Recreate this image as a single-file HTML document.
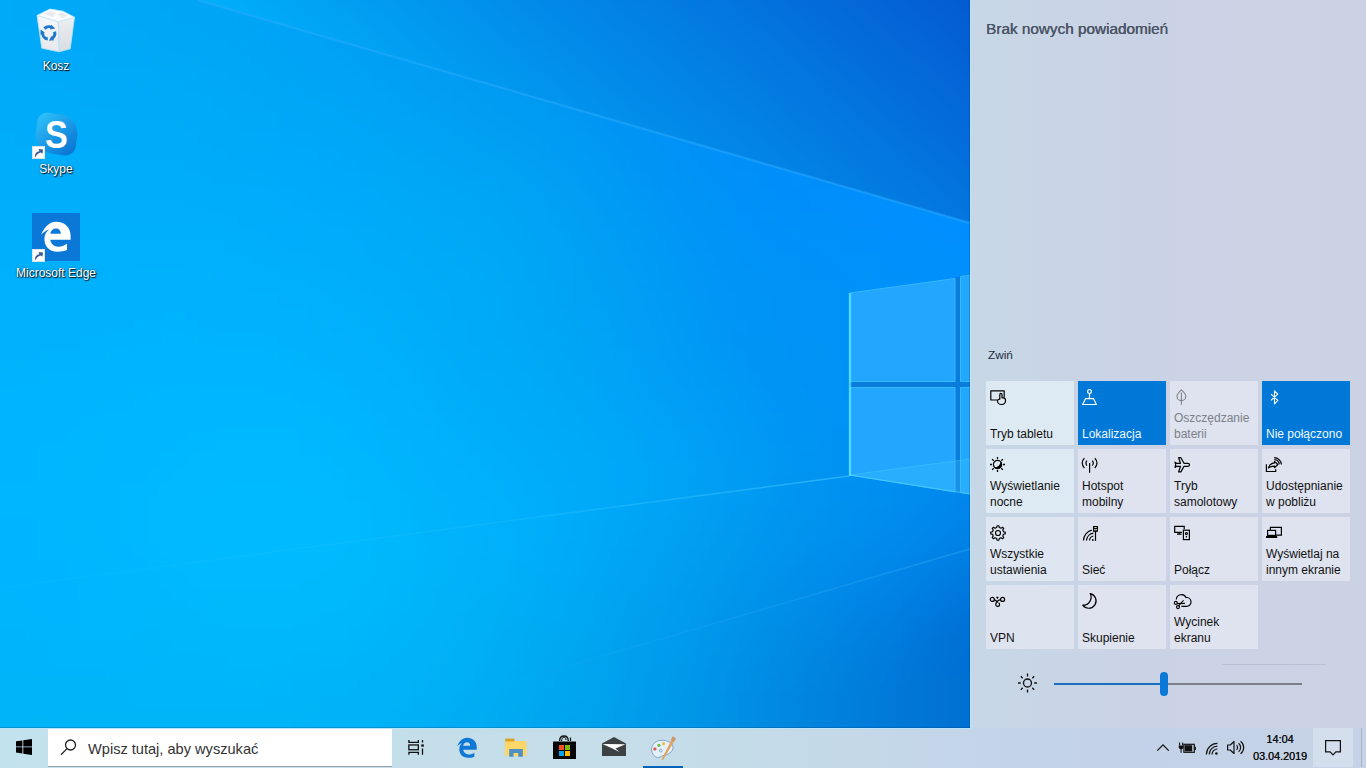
<!DOCTYPE html>
<html><head><meta charset="utf-8">
<style>
*{margin:0;padding:0;box-sizing:border-box}
html,body{width:1366px;height:768px;overflow:hidden;background:#00a8f8;font-family:"Liberation Sans",sans-serif}
.abs{position:absolute}
#wall{position:absolute;left:0;top:0;width:1366px;height:768px}
.dlabel{position:absolute;color:#fff;font-size:12px;line-height:14px;text-align:center;white-space:nowrap;text-shadow:1px 1px 1px rgba(0,0,0,.9),0 0 2px rgba(0,0,0,.6)}
#panel{position:absolute;left:970px;top:0;width:396px;height:728px;background:linear-gradient(90deg,#c7d7e6 0%,#cad3e5 40%,#cbd2e4 100%);border-left:1px solid #b9e6fd}
#panel .title{position:absolute;left:15px;top:19.5px;font-size:15.3px;color:#4b5465;white-space:nowrap;letter-spacing:0;text-shadow:0.35px 0 0 #4b5465}
#panel .zwin{position:absolute;left:17px;top:348px;font-size:11.8px;color:#1c2a3a;white-space:nowrap}
.tile{position:absolute;width:88px;height:64px;background:#dee3ef}
.tile.on{background:#0078d7}
.tile svg{position:absolute;left:4px;top:8px;width:16px;height:16px;overflow:visible}
.tile .t{position:absolute;left:4px;bottom:3px;font-size:12px;line-height:16px;color:#111;white-space:nowrap}
.tile.on .t{color:#f2f8ff}
.tile.dis .t{color:#7c8088}
#taskbar{position:absolute;left:0;top:728px;width:1366px;height:40px;background:linear-gradient(90deg,#c2e2ee 0%,#c5dde8 50%,#c3d2e9 80%,#c6d3e6 100%);}
</style></head><body>
<svg id="wall" width="1366" height="768" viewBox="0 0 1366 768">
<defs>
<filter id="blur" filterUnits="userSpaceOnUse" x="-100" y="-100" width="1200" height="1000"><feGaussianBlur stdDeviation="22"/></filter>
<linearGradient id="gTop" x1="319.4" y1="133.9" x2="702.4" y2="-288.2" gradientUnits="userSpaceOnUse"><stop offset="0" stop-color="#00b2fc"/><stop offset="1" stop-color="#0455cf"/></linearGradient>
<linearGradient id="gFloor" x1="0" y1="588" x2="849" y2="476" gradientUnits="userSpaceOnUse"><stop offset="0" stop-color="#40c8ff" stop-opacity="0.05"/><stop offset="0.6" stop-color="#40c8ff" stop-opacity="0.2"/><stop offset="1" stop-color="#50d0ff" stop-opacity="0.5"/></linearGradient>
<linearGradient id="gL2" x1="970" y1="549" x2="400" y2="715" gradientUnits="userSpaceOnUse"><stop offset="0" stop-color="#30a8f8" stop-opacity="0.45"/><stop offset="1" stop-color="#30a8f8" stop-opacity="0"/></linearGradient>
<linearGradient id="gPane" x1="0" y1="0" x2="1" y2="1">
<stop offset="0" stop-color="#28aaff"/><stop offset="1" stop-color="#1f9ffb"/>
</linearGradient>
</defs>
<g filter="url(#blur)"><rect x="-80" y="-80" width="40" height="40" fill="#00a9f9"/><rect x="-40" y="-80" width="40" height="40" fill="#00a9f9"/><rect x="0" y="-80" width="40" height="40" fill="#00a9f8"/><rect x="40" y="-80" width="40" height="40" fill="#00a8f8"/><rect x="80" y="-80" width="40" height="40" fill="#00a7f7"/><rect x="120" y="-80" width="40" height="40" fill="#00a6f6"/><rect x="160" y="-80" width="40" height="40" fill="#01a5f6"/><rect x="200" y="-80" width="40" height="40" fill="#01a4f5"/><rect x="240" y="-80" width="40" height="40" fill="#02a3f5"/><rect x="280" y="-80" width="40" height="40" fill="#02a1f4"/><rect x="320" y="-80" width="40" height="40" fill="#029ff4"/><rect x="360" y="-80" width="40" height="40" fill="#029df3"/><rect x="400" y="-80" width="40" height="40" fill="#029af3"/><rect x="440" y="-80" width="40" height="40" fill="#0298f2"/><rect x="480" y="-80" width="40" height="40" fill="#0295f2"/><rect x="520" y="-80" width="40" height="40" fill="#0293f2"/><rect x="560" y="-80" width="40" height="40" fill="#0291f3"/><rect x="600" y="-80" width="40" height="40" fill="#028ff4"/><rect x="640" y="-80" width="40" height="40" fill="#028df6"/><rect x="680" y="-80" width="40" height="40" fill="#028bf8"/><rect x="720" y="-80" width="40" height="40" fill="#038af9"/><rect x="760" y="-80" width="40" height="40" fill="#0389fb"/><rect x="800" y="-80" width="40" height="40" fill="#0488fd"/><rect x="840" y="-80" width="40" height="40" fill="#0588fe"/><rect x="880" y="-80" width="40" height="40" fill="#0587ff"/><rect x="920" y="-80" width="40" height="40" fill="#0687ff"/><rect x="960" y="-80" width="40" height="40" fill="#0786ff"/><rect x="1000" y="-80" width="40" height="40" fill="#0786ff"/><rect x="1040" y="-80" width="40" height="40" fill="#0786ff"/><rect x="-80" y="-40" width="40" height="40" fill="#00a9f9"/><rect x="-40" y="-40" width="40" height="40" fill="#00a9f9"/><rect x="0" y="-40" width="40" height="40" fill="#00a9f8"/><rect x="40" y="-40" width="40" height="40" fill="#00a8f8"/><rect x="80" y="-40" width="40" height="40" fill="#00a7f7"/><rect x="120" y="-40" width="40" height="40" fill="#00a6f6"/><rect x="160" y="-40" width="40" height="40" fill="#01a5f6"/><rect x="200" y="-40" width="40" height="40" fill="#01a4f5"/><rect x="240" y="-40" width="40" height="40" fill="#02a3f5"/><rect x="280" y="-40" width="40" height="40" fill="#02a1f4"/><rect x="320" y="-40" width="40" height="40" fill="#029ff4"/><rect x="360" y="-40" width="40" height="40" fill="#029df3"/><rect x="400" y="-40" width="40" height="40" fill="#029af3"/><rect x="440" y="-40" width="40" height="40" fill="#0298f2"/><rect x="480" y="-40" width="40" height="40" fill="#0295f2"/><rect x="520" y="-40" width="40" height="40" fill="#0293f2"/><rect x="560" y="-40" width="40" height="40" fill="#0291f3"/><rect x="600" y="-40" width="40" height="40" fill="#028ff4"/><rect x="640" y="-40" width="40" height="40" fill="#028df6"/><rect x="680" y="-40" width="40" height="40" fill="#028bf8"/><rect x="720" y="-40" width="40" height="40" fill="#038af9"/><rect x="760" y="-40" width="40" height="40" fill="#0389fb"/><rect x="800" y="-40" width="40" height="40" fill="#0488fd"/><rect x="840" y="-40" width="40" height="40" fill="#0588fe"/><rect x="880" y="-40" width="40" height="40" fill="#0587ff"/><rect x="920" y="-40" width="40" height="40" fill="#0687ff"/><rect x="960" y="-40" width="40" height="40" fill="#0786ff"/><rect x="1000" y="-40" width="40" height="40" fill="#0786ff"/><rect x="1040" y="-40" width="40" height="40" fill="#0786ff"/><rect x="-80" y="0" width="40" height="40" fill="#00aaf9"/><rect x="-40" y="0" width="40" height="40" fill="#00aaf9"/><rect x="0" y="0" width="40" height="40" fill="#00a9f8"/><rect x="40" y="0" width="40" height="40" fill="#00a8f8"/><rect x="80" y="0" width="40" height="40" fill="#00a8f7"/><rect x="120" y="0" width="40" height="40" fill="#00a7f6"/><rect x="160" y="0" width="40" height="40" fill="#01a6f6"/><rect x="200" y="0" width="40" height="40" fill="#01a5f5"/><rect x="240" y="0" width="40" height="40" fill="#02a4f5"/><rect x="280" y="0" width="40" height="40" fill="#02a2f5"/><rect x="320" y="0" width="40" height="40" fill="#02a0f4"/><rect x="360" y="0" width="40" height="40" fill="#029ef3"/><rect x="400" y="0" width="40" height="40" fill="#029bf3"/><rect x="440" y="0" width="40" height="40" fill="#0299f2"/><rect x="480" y="0" width="40" height="40" fill="#0296f2"/><rect x="520" y="0" width="40" height="40" fill="#0294f2"/><rect x="560" y="0" width="40" height="40" fill="#0292f3"/><rect x="600" y="0" width="40" height="40" fill="#028ff4"/><rect x="640" y="0" width="40" height="40" fill="#028df6"/><rect x="680" y="0" width="40" height="40" fill="#028cf7"/><rect x="720" y="0" width="40" height="40" fill="#028bf9"/><rect x="760" y="0" width="40" height="40" fill="#038afb"/><rect x="800" y="0" width="40" height="40" fill="#0489fd"/><rect x="840" y="0" width="40" height="40" fill="#0489fe"/><rect x="880" y="0" width="40" height="40" fill="#0588ff"/><rect x="920" y="0" width="40" height="40" fill="#0687ff"/><rect x="960" y="0" width="40" height="40" fill="#0787ff"/><rect x="1000" y="0" width="40" height="40" fill="#0787ff"/><rect x="1040" y="0" width="40" height="40" fill="#0787ff"/><rect x="-80" y="40" width="40" height="40" fill="#00abf9"/><rect x="-40" y="40" width="40" height="40" fill="#00abf9"/><rect x="0" y="40" width="40" height="40" fill="#00aaf9"/><rect x="40" y="40" width="40" height="40" fill="#00aaf8"/><rect x="80" y="40" width="40" height="40" fill="#00a9f8"/><rect x="120" y="40" width="40" height="40" fill="#00a9f7"/><rect x="160" y="40" width="40" height="40" fill="#01a8f6"/><rect x="200" y="40" width="40" height="40" fill="#01a7f6"/><rect x="240" y="40" width="40" height="40" fill="#01a6f6"/><rect x="280" y="40" width="40" height="40" fill="#02a4f6"/><rect x="320" y="40" width="40" height="40" fill="#02a2f5"/><rect x="360" y="40" width="40" height="40" fill="#02a0f4"/><rect x="400" y="40" width="40" height="40" fill="#029ef3"/><rect x="440" y="40" width="40" height="40" fill="#029bf2"/><rect x="480" y="40" width="40" height="40" fill="#0298f2"/><rect x="520" y="40" width="40" height="40" fill="#0296f2"/><rect x="560" y="40" width="40" height="40" fill="#0293f3"/><rect x="600" y="40" width="40" height="40" fill="#0191f4"/><rect x="640" y="40" width="40" height="40" fill="#018ff5"/><rect x="680" y="40" width="40" height="40" fill="#028df7"/><rect x="720" y="40" width="40" height="40" fill="#028cf9"/><rect x="760" y="40" width="40" height="40" fill="#038bfb"/><rect x="800" y="40" width="40" height="40" fill="#038afc"/><rect x="840" y="40" width="40" height="40" fill="#048afe"/><rect x="880" y="40" width="40" height="40" fill="#0589ff"/><rect x="920" y="40" width="40" height="40" fill="#0689ff"/><rect x="960" y="40" width="40" height="40" fill="#0688ff"/><rect x="1000" y="40" width="40" height="40" fill="#0688ff"/><rect x="1040" y="40" width="40" height="40" fill="#0688ff"/><rect x="-80" y="80" width="40" height="40" fill="#00acfa"/><rect x="-40" y="80" width="40" height="40" fill="#00acfa"/><rect x="0" y="80" width="40" height="40" fill="#00abfa"/><rect x="40" y="80" width="40" height="40" fill="#00abf9"/><rect x="80" y="80" width="40" height="40" fill="#00aaf9"/><rect x="120" y="80" width="40" height="40" fill="#00aaf8"/><rect x="160" y="80" width="40" height="40" fill="#01aaf7"/><rect x="200" y="80" width="40" height="40" fill="#01a9f7"/><rect x="240" y="80" width="40" height="40" fill="#01a8f7"/><rect x="280" y="80" width="40" height="40" fill="#01a6f7"/><rect x="320" y="80" width="40" height="40" fill="#01a5f6"/><rect x="360" y="80" width="40" height="40" fill="#02a3f5"/><rect x="400" y="80" width="40" height="40" fill="#02a0f4"/><rect x="440" y="80" width="40" height="40" fill="#029ef3"/><rect x="480" y="80" width="40" height="40" fill="#029bf2"/><rect x="520" y="80" width="40" height="40" fill="#0299f2"/><rect x="560" y="80" width="40" height="40" fill="#0196f3"/><rect x="600" y="80" width="40" height="40" fill="#0193f4"/><rect x="640" y="80" width="40" height="40" fill="#0190f5"/><rect x="680" y="80" width="40" height="40" fill="#018ef7"/><rect x="720" y="80" width="40" height="40" fill="#028df9"/><rect x="760" y="80" width="40" height="40" fill="#028cfb"/><rect x="800" y="80" width="40" height="40" fill="#038bfc"/><rect x="840" y="80" width="40" height="40" fill="#048bfe"/><rect x="880" y="80" width="40" height="40" fill="#058bff"/><rect x="920" y="80" width="40" height="40" fill="#068aff"/><rect x="960" y="80" width="40" height="40" fill="#068aff"/><rect x="1000" y="80" width="40" height="40" fill="#068aff"/><rect x="1040" y="80" width="40" height="40" fill="#068aff"/><rect x="-80" y="120" width="40" height="40" fill="#00adfa"/><rect x="-40" y="120" width="40" height="40" fill="#00adfa"/><rect x="0" y="120" width="40" height="40" fill="#00acfa"/><rect x="40" y="120" width="40" height="40" fill="#00acfa"/><rect x="80" y="120" width="40" height="40" fill="#00acf9"/><rect x="120" y="120" width="40" height="40" fill="#00abf9"/><rect x="160" y="120" width="40" height="40" fill="#01abf9"/><rect x="200" y="120" width="40" height="40" fill="#01aaf9"/><rect x="240" y="120" width="40" height="40" fill="#01a9f9"/><rect x="280" y="120" width="40" height="40" fill="#01a8f9"/><rect x="320" y="120" width="40" height="40" fill="#01a7f8"/><rect x="360" y="120" width="40" height="40" fill="#01a5f7"/><rect x="400" y="120" width="40" height="40" fill="#02a4f5"/><rect x="440" y="120" width="40" height="40" fill="#02a2f4"/><rect x="480" y="120" width="40" height="40" fill="#029ff3"/><rect x="520" y="120" width="40" height="40" fill="#029df3"/><rect x="560" y="120" width="40" height="40" fill="#0199f3"/><rect x="600" y="120" width="40" height="40" fill="#0196f4"/><rect x="640" y="120" width="40" height="40" fill="#0192f5"/><rect x="680" y="120" width="40" height="40" fill="#0190f7"/><rect x="720" y="120" width="40" height="40" fill="#028ef9"/><rect x="760" y="120" width="40" height="40" fill="#028dfa"/><rect x="800" y="120" width="40" height="40" fill="#038dfc"/><rect x="840" y="120" width="40" height="40" fill="#048dfd"/><rect x="880" y="120" width="40" height="40" fill="#058cff"/><rect x="920" y="120" width="40" height="40" fill="#068cff"/><rect x="960" y="120" width="40" height="40" fill="#068bff"/><rect x="1000" y="120" width="40" height="40" fill="#068bff"/><rect x="1040" y="120" width="40" height="40" fill="#068bff"/><rect x="-80" y="160" width="40" height="40" fill="#00aefb"/><rect x="-40" y="160" width="40" height="40" fill="#00aefb"/><rect x="0" y="160" width="40" height="40" fill="#00adfb"/><rect x="40" y="160" width="40" height="40" fill="#00adfb"/><rect x="80" y="160" width="40" height="40" fill="#00adfa"/><rect x="120" y="160" width="40" height="40" fill="#00adfa"/><rect x="160" y="160" width="40" height="40" fill="#01adfa"/><rect x="200" y="160" width="40" height="40" fill="#01acfa"/><rect x="240" y="160" width="40" height="40" fill="#00abfa"/><rect x="280" y="160" width="40" height="40" fill="#00aafa"/><rect x="320" y="160" width="40" height="40" fill="#00a9fa"/><rect x="360" y="160" width="40" height="40" fill="#01a8f8"/><rect x="400" y="160" width="40" height="40" fill="#01a7f7"/><rect x="440" y="160" width="40" height="40" fill="#02a5f5"/><rect x="480" y="160" width="40" height="40" fill="#02a4f4"/><rect x="520" y="160" width="40" height="40" fill="#02a1f4"/><rect x="560" y="160" width="40" height="40" fill="#029df4"/><rect x="600" y="160" width="40" height="40" fill="#0198f4"/><rect x="640" y="160" width="40" height="40" fill="#0195f5"/><rect x="680" y="160" width="40" height="40" fill="#0292f7"/><rect x="720" y="160" width="40" height="40" fill="#0290f8"/><rect x="760" y="160" width="40" height="40" fill="#028ffa"/><rect x="800" y="160" width="40" height="40" fill="#028efb"/><rect x="840" y="160" width="40" height="40" fill="#038efd"/><rect x="880" y="160" width="40" height="40" fill="#048efe"/><rect x="920" y="160" width="40" height="40" fill="#058dff"/><rect x="960" y="160" width="40" height="40" fill="#068dff"/><rect x="1000" y="160" width="40" height="40" fill="#068dff"/><rect x="1040" y="160" width="40" height="40" fill="#068dff"/><rect x="-80" y="200" width="40" height="40" fill="#00aefc"/><rect x="-40" y="200" width="40" height="40" fill="#00aefc"/><rect x="0" y="200" width="40" height="40" fill="#00aefc"/><rect x="40" y="200" width="40" height="40" fill="#00aefb"/><rect x="80" y="200" width="40" height="40" fill="#00aefb"/><rect x="120" y="200" width="40" height="40" fill="#01aefb"/><rect x="160" y="200" width="40" height="40" fill="#01aefb"/><rect x="200" y="200" width="40" height="40" fill="#01aefb"/><rect x="240" y="200" width="40" height="40" fill="#01adfc"/><rect x="280" y="200" width="40" height="40" fill="#00acfc"/><rect x="320" y="200" width="40" height="40" fill="#00abfb"/><rect x="360" y="200" width="40" height="40" fill="#01aaf9"/><rect x="400" y="200" width="40" height="40" fill="#01a9f8"/><rect x="440" y="200" width="40" height="40" fill="#02a8f6"/><rect x="480" y="200" width="40" height="40" fill="#02a6f5"/><rect x="520" y="200" width="40" height="40" fill="#02a3f5"/><rect x="560" y="200" width="40" height="40" fill="#02a0f4"/><rect x="600" y="200" width="40" height="40" fill="#029bf4"/><rect x="640" y="200" width="40" height="40" fill="#0297f5"/><rect x="680" y="200" width="40" height="40" fill="#0294f6"/><rect x="720" y="200" width="40" height="40" fill="#0292f8"/><rect x="760" y="200" width="40" height="40" fill="#0290f9"/><rect x="800" y="200" width="40" height="40" fill="#0290fa"/><rect x="840" y="200" width="40" height="40" fill="#028ffb"/><rect x="880" y="200" width="40" height="40" fill="#048ffd"/><rect x="920" y="200" width="40" height="40" fill="#058ffe"/><rect x="960" y="200" width="40" height="40" fill="#068efe"/><rect x="1000" y="200" width="40" height="40" fill="#068efe"/><rect x="1040" y="200" width="40" height="40" fill="#068efe"/><rect x="-80" y="240" width="40" height="40" fill="#00affc"/><rect x="-40" y="240" width="40" height="40" fill="#00affc"/><rect x="0" y="240" width="40" height="40" fill="#00affc"/><rect x="40" y="240" width="40" height="40" fill="#00b0fc"/><rect x="80" y="240" width="40" height="40" fill="#01b0fc"/><rect x="120" y="240" width="40" height="40" fill="#01b0fc"/><rect x="160" y="240" width="40" height="40" fill="#01b0fc"/><rect x="200" y="240" width="40" height="40" fill="#01b0fc"/><rect x="240" y="240" width="40" height="40" fill="#01affc"/><rect x="280" y="240" width="40" height="40" fill="#01aefc"/><rect x="320" y="240" width="40" height="40" fill="#01adfb"/><rect x="360" y="240" width="40" height="40" fill="#01acfa"/><rect x="400" y="240" width="40" height="40" fill="#01abf8"/><rect x="440" y="240" width="40" height="40" fill="#02a9f7"/><rect x="480" y="240" width="40" height="40" fill="#02a8f6"/><rect x="520" y="240" width="40" height="40" fill="#02a5f5"/><rect x="560" y="240" width="40" height="40" fill="#03a2f4"/><rect x="600" y="240" width="40" height="40" fill="#039ef4"/><rect x="640" y="240" width="40" height="40" fill="#039af5"/><rect x="680" y="240" width="40" height="40" fill="#0396f6"/><rect x="720" y="240" width="40" height="40" fill="#0293f7"/><rect x="760" y="240" width="40" height="40" fill="#0192f7"/><rect x="800" y="240" width="40" height="40" fill="#0191f8"/><rect x="840" y="240" width="40" height="40" fill="#0291fa"/><rect x="880" y="240" width="40" height="40" fill="#0390fb"/><rect x="920" y="240" width="40" height="40" fill="#0490fc"/><rect x="960" y="240" width="40" height="40" fill="#058ffd"/><rect x="1000" y="240" width="40" height="40" fill="#058ffd"/><rect x="1040" y="240" width="40" height="40" fill="#058ffd"/><rect x="-80" y="280" width="40" height="40" fill="#00b0fd"/><rect x="-40" y="280" width="40" height="40" fill="#00b0fd"/><rect x="0" y="280" width="40" height="40" fill="#00b0fd"/><rect x="40" y="280" width="40" height="40" fill="#00b1fd"/><rect x="80" y="280" width="40" height="40" fill="#01b1fd"/><rect x="120" y="280" width="40" height="40" fill="#01b2fd"/><rect x="160" y="280" width="40" height="40" fill="#02b2fd"/><rect x="200" y="280" width="40" height="40" fill="#02b1fd"/><rect x="240" y="280" width="40" height="40" fill="#02b1fd"/><rect x="280" y="280" width="40" height="40" fill="#02b0fd"/><rect x="320" y="280" width="40" height="40" fill="#01affc"/><rect x="360" y="280" width="40" height="40" fill="#01aefa"/><rect x="400" y="280" width="40" height="40" fill="#01acf9"/><rect x="440" y="280" width="40" height="40" fill="#01aaf7"/><rect x="480" y="280" width="40" height="40" fill="#02a9f6"/><rect x="520" y="280" width="40" height="40" fill="#02a6f5"/><rect x="560" y="280" width="40" height="40" fill="#03a3f4"/><rect x="600" y="280" width="40" height="40" fill="#03a0f4"/><rect x="640" y="280" width="40" height="40" fill="#039bf4"/><rect x="680" y="280" width="40" height="40" fill="#0397f5"/><rect x="720" y="280" width="40" height="40" fill="#0294f6"/><rect x="760" y="280" width="40" height="40" fill="#0193f6"/><rect x="800" y="280" width="40" height="40" fill="#0092f6"/><rect x="840" y="280" width="40" height="40" fill="#0191f8"/><rect x="880" y="280" width="40" height="40" fill="#0291f9"/><rect x="920" y="280" width="40" height="40" fill="#0390fa"/><rect x="960" y="280" width="40" height="40" fill="#048efa"/><rect x="1000" y="280" width="40" height="40" fill="#048efa"/><rect x="1040" y="280" width="40" height="40" fill="#048efa"/><rect x="-80" y="320" width="40" height="40" fill="#00b2fd"/><rect x="-40" y="320" width="40" height="40" fill="#00b2fd"/><rect x="0" y="320" width="40" height="40" fill="#00b2fd"/><rect x="40" y="320" width="40" height="40" fill="#00b2fd"/><rect x="80" y="320" width="40" height="40" fill="#01b3fe"/><rect x="120" y="320" width="40" height="40" fill="#01b3fe"/><rect x="160" y="320" width="40" height="40" fill="#02b4fe"/><rect x="200" y="320" width="40" height="40" fill="#02b3fe"/><rect x="240" y="320" width="40" height="40" fill="#02b3fe"/><rect x="280" y="320" width="40" height="40" fill="#02b2fd"/><rect x="320" y="320" width="40" height="40" fill="#02b1fc"/><rect x="360" y="320" width="40" height="40" fill="#01affb"/><rect x="400" y="320" width="40" height="40" fill="#01adf9"/><rect x="440" y="320" width="40" height="40" fill="#01abf8"/><rect x="480" y="320" width="40" height="40" fill="#02a9f7"/><rect x="520" y="320" width="40" height="40" fill="#02a7f6"/><rect x="560" y="320" width="40" height="40" fill="#02a5f5"/><rect x="600" y="320" width="40" height="40" fill="#03a1f5"/><rect x="640" y="320" width="40" height="40" fill="#039df5"/><rect x="680" y="320" width="40" height="40" fill="#0298f5"/><rect x="720" y="320" width="40" height="40" fill="#0295f5"/><rect x="760" y="320" width="40" height="40" fill="#0193f5"/><rect x="800" y="320" width="40" height="40" fill="#0092f5"/><rect x="840" y="320" width="40" height="40" fill="#0191f6"/><rect x="880" y="320" width="40" height="40" fill="#0190f7"/><rect x="920" y="320" width="40" height="40" fill="#028ff8"/><rect x="960" y="320" width="40" height="40" fill="#038df7"/><rect x="1000" y="320" width="40" height="40" fill="#038df7"/><rect x="1040" y="320" width="40" height="40" fill="#038df7"/><rect x="-80" y="360" width="40" height="40" fill="#00b3fd"/><rect x="-40" y="360" width="40" height="40" fill="#00b3fd"/><rect x="0" y="360" width="40" height="40" fill="#00b3fe"/><rect x="40" y="360" width="40" height="40" fill="#00b4fe"/><rect x="80" y="360" width="40" height="40" fill="#01b4fe"/><rect x="120" y="360" width="40" height="40" fill="#01b5fe"/><rect x="160" y="360" width="40" height="40" fill="#02b5fe"/><rect x="200" y="360" width="40" height="40" fill="#02b5fe"/><rect x="240" y="360" width="40" height="40" fill="#02b5fe"/><rect x="280" y="360" width="40" height="40" fill="#02b4fe"/><rect x="320" y="360" width="40" height="40" fill="#02b3fd"/><rect x="360" y="360" width="40" height="40" fill="#01b1fb"/><rect x="400" y="360" width="40" height="40" fill="#01affa"/><rect x="440" y="360" width="40" height="40" fill="#01acf9"/><rect x="480" y="360" width="40" height="40" fill="#01abf8"/><rect x="520" y="360" width="40" height="40" fill="#02a9f7"/><rect x="560" y="360" width="40" height="40" fill="#02a6f7"/><rect x="600" y="360" width="40" height="40" fill="#02a3f6"/><rect x="640" y="360" width="40" height="40" fill="#029ff6"/><rect x="680" y="360" width="40" height="40" fill="#029bf5"/><rect x="720" y="360" width="40" height="40" fill="#0297f5"/><rect x="760" y="360" width="40" height="40" fill="#0294f5"/><rect x="800" y="360" width="40" height="40" fill="#0192f5"/><rect x="840" y="360" width="40" height="40" fill="#0191f5"/><rect x="880" y="360" width="40" height="40" fill="#0190f5"/><rect x="920" y="360" width="40" height="40" fill="#028ef5"/><rect x="960" y="360" width="40" height="40" fill="#028cf5"/><rect x="1000" y="360" width="40" height="40" fill="#028cf5"/><rect x="1040" y="360" width="40" height="40" fill="#028cf5"/><rect x="-80" y="400" width="40" height="40" fill="#00b4fe"/><rect x="-40" y="400" width="40" height="40" fill="#00b4fe"/><rect x="0" y="400" width="40" height="40" fill="#00b5fe"/><rect x="40" y="400" width="40" height="40" fill="#00b5fe"/><rect x="80" y="400" width="40" height="40" fill="#01b6fe"/><rect x="120" y="400" width="40" height="40" fill="#01b6ff"/><rect x="160" y="400" width="40" height="40" fill="#02b7ff"/><rect x="200" y="400" width="40" height="40" fill="#02b7ff"/><rect x="240" y="400" width="40" height="40" fill="#02b7ff"/><rect x="280" y="400" width="40" height="40" fill="#02b7fe"/><rect x="320" y="400" width="40" height="40" fill="#02b5fe"/><rect x="360" y="400" width="40" height="40" fill="#01b3fc"/><rect x="400" y="400" width="40" height="40" fill="#01b1fb"/><rect x="440" y="400" width="40" height="40" fill="#01aefa"/><rect x="480" y="400" width="40" height="40" fill="#01acf9"/><rect x="520" y="400" width="40" height="40" fill="#01aaf9"/><rect x="560" y="400" width="40" height="40" fill="#02a8f8"/><rect x="600" y="400" width="40" height="40" fill="#02a5f8"/><rect x="640" y="400" width="40" height="40" fill="#02a2f7"/><rect x="680" y="400" width="40" height="40" fill="#029ef6"/><rect x="720" y="400" width="40" height="40" fill="#029af5"/><rect x="760" y="400" width="40" height="40" fill="#0296f4"/><rect x="800" y="400" width="40" height="40" fill="#0293f4"/><rect x="840" y="400" width="40" height="40" fill="#0291f4"/><rect x="880" y="400" width="40" height="40" fill="#018ff3"/><rect x="920" y="400" width="40" height="40" fill="#018df3"/><rect x="960" y="400" width="40" height="40" fill="#018bf2"/><rect x="1000" y="400" width="40" height="40" fill="#018bf2"/><rect x="1040" y="400" width="40" height="40" fill="#018bf2"/><rect x="-80" y="440" width="40" height="40" fill="#00b5fe"/><rect x="-40" y="440" width="40" height="40" fill="#00b5fe"/><rect x="0" y="440" width="40" height="40" fill="#00b5fe"/><rect x="40" y="440" width="40" height="40" fill="#00b6fe"/><rect x="80" y="440" width="40" height="40" fill="#01b7fe"/><rect x="120" y="440" width="40" height="40" fill="#01b7ff"/><rect x="160" y="440" width="40" height="40" fill="#02b8ff"/><rect x="200" y="440" width="40" height="40" fill="#02b9ff"/><rect x="240" y="440" width="40" height="40" fill="#02b9ff"/><rect x="280" y="440" width="40" height="40" fill="#02b9ff"/><rect x="320" y="440" width="40" height="40" fill="#02b7fe"/><rect x="360" y="440" width="40" height="40" fill="#01b5fd"/><rect x="400" y="440" width="40" height="40" fill="#01b3fc"/><rect x="440" y="440" width="40" height="40" fill="#01b0fb"/><rect x="480" y="440" width="40" height="40" fill="#01aefb"/><rect x="520" y="440" width="40" height="40" fill="#01acfa"/><rect x="560" y="440" width="40" height="40" fill="#01aaf9"/><rect x="600" y="440" width="40" height="40" fill="#02a7f8"/><rect x="640" y="440" width="40" height="40" fill="#02a4f7"/><rect x="680" y="440" width="40" height="40" fill="#02a0f6"/><rect x="720" y="440" width="40" height="40" fill="#029bf4"/><rect x="760" y="440" width="40" height="40" fill="#0297f3"/><rect x="800" y="440" width="40" height="40" fill="#0293f2"/><rect x="840" y="440" width="40" height="40" fill="#0291f2"/><rect x="880" y="440" width="40" height="40" fill="#018ff1"/><rect x="920" y="440" width="40" height="40" fill="#018cf0"/><rect x="960" y="440" width="40" height="40" fill="#0188ee"/><rect x="1000" y="440" width="40" height="40" fill="#0188ee"/><rect x="1040" y="440" width="40" height="40" fill="#0188ee"/><rect x="-80" y="480" width="40" height="40" fill="#00b5fe"/><rect x="-40" y="480" width="40" height="40" fill="#00b5fe"/><rect x="0" y="480" width="40" height="40" fill="#00b6fe"/><rect x="40" y="480" width="40" height="40" fill="#00b6fe"/><rect x="80" y="480" width="40" height="40" fill="#00b7ff"/><rect x="120" y="480" width="40" height="40" fill="#01b8ff"/><rect x="160" y="480" width="40" height="40" fill="#02b9ff"/><rect x="200" y="480" width="40" height="40" fill="#02baff"/><rect x="240" y="480" width="40" height="40" fill="#02baff"/><rect x="280" y="480" width="40" height="40" fill="#02baff"/><rect x="320" y="480" width="40" height="40" fill="#02b9ff"/><rect x="360" y="480" width="40" height="40" fill="#01b7fd"/><rect x="400" y="480" width="40" height="40" fill="#01b4fc"/><rect x="440" y="480" width="40" height="40" fill="#01b2fb"/><rect x="480" y="480" width="40" height="40" fill="#01b0fb"/><rect x="520" y="480" width="40" height="40" fill="#01adfb"/><rect x="560" y="480" width="40" height="40" fill="#01aafa"/><rect x="600" y="480" width="40" height="40" fill="#02a7f8"/><rect x="640" y="480" width="40" height="40" fill="#02a4f6"/><rect x="680" y="480" width="40" height="40" fill="#02a0f4"/><rect x="720" y="480" width="40" height="40" fill="#029bf2"/><rect x="760" y="480" width="40" height="40" fill="#0296f0"/><rect x="800" y="480" width="40" height="40" fill="#0293f0"/><rect x="840" y="480" width="40" height="40" fill="#0290f0"/><rect x="880" y="480" width="40" height="40" fill="#028def"/><rect x="920" y="480" width="40" height="40" fill="#0189ed"/><rect x="960" y="480" width="40" height="40" fill="#0085ea"/><rect x="1000" y="480" width="40" height="40" fill="#0085ea"/><rect x="1040" y="480" width="40" height="40" fill="#0085ea"/><rect x="-80" y="520" width="40" height="40" fill="#00b5fe"/><rect x="-40" y="520" width="40" height="40" fill="#00b5fe"/><rect x="0" y="520" width="40" height="40" fill="#00b5fe"/><rect x="40" y="520" width="40" height="40" fill="#00b6fe"/><rect x="80" y="520" width="40" height="40" fill="#00b7fe"/><rect x="120" y="520" width="40" height="40" fill="#01b8ff"/><rect x="160" y="520" width="40" height="40" fill="#02b9ff"/><rect x="200" y="520" width="40" height="40" fill="#02baff"/><rect x="240" y="520" width="40" height="40" fill="#02baff"/><rect x="280" y="520" width="40" height="40" fill="#02baff"/><rect x="320" y="520" width="40" height="40" fill="#02b9fe"/><rect x="360" y="520" width="40" height="40" fill="#01b7fd"/><rect x="400" y="520" width="40" height="40" fill="#01b5fc"/><rect x="440" y="520" width="40" height="40" fill="#01b3fb"/><rect x="480" y="520" width="40" height="40" fill="#01b0fa"/><rect x="520" y="520" width="40" height="40" fill="#01adfa"/><rect x="560" y="520" width="40" height="40" fill="#01aaf8"/><rect x="600" y="520" width="40" height="40" fill="#02a6f6"/><rect x="640" y="520" width="40" height="40" fill="#02a2f3"/><rect x="680" y="520" width="40" height="40" fill="#029ef1"/><rect x="720" y="520" width="40" height="40" fill="#0299f0"/><rect x="760" y="520" width="40" height="40" fill="#0294ee"/><rect x="800" y="520" width="40" height="40" fill="#0291ed"/><rect x="840" y="520" width="40" height="40" fill="#038eed"/><rect x="880" y="520" width="40" height="40" fill="#038aec"/><rect x="920" y="520" width="40" height="40" fill="#0284e8"/><rect x="960" y="520" width="40" height="40" fill="#0180e5"/><rect x="1000" y="520" width="40" height="40" fill="#0180e5"/><rect x="1040" y="520" width="40" height="40" fill="#0180e5"/><rect x="-80" y="560" width="40" height="40" fill="#00b5fd"/><rect x="-40" y="560" width="40" height="40" fill="#00b5fd"/><rect x="0" y="560" width="40" height="40" fill="#00b5fd"/><rect x="40" y="560" width="40" height="40" fill="#00b5fe"/><rect x="80" y="560" width="40" height="40" fill="#01b6fe"/><rect x="120" y="560" width="40" height="40" fill="#01b7fe"/><rect x="160" y="560" width="40" height="40" fill="#02b8fe"/><rect x="200" y="560" width="40" height="40" fill="#02b9fe"/><rect x="240" y="560" width="40" height="40" fill="#02b9fe"/><rect x="280" y="560" width="40" height="40" fill="#02b9fe"/><rect x="320" y="560" width="40" height="40" fill="#02b9fd"/><rect x="360" y="560" width="40" height="40" fill="#01b7fc"/><rect x="400" y="560" width="40" height="40" fill="#01b5fa"/><rect x="440" y="560" width="40" height="40" fill="#01b2f9"/><rect x="480" y="560" width="40" height="40" fill="#01b0f8"/><rect x="520" y="560" width="40" height="40" fill="#01acf7"/><rect x="560" y="560" width="40" height="40" fill="#02a8f5"/><rect x="600" y="560" width="40" height="40" fill="#02a4f2"/><rect x="640" y="560" width="40" height="40" fill="#02a0f0"/><rect x="680" y="560" width="40" height="40" fill="#029bee"/><rect x="720" y="560" width="40" height="40" fill="#0296ed"/><rect x="760" y="560" width="40" height="40" fill="#0291eb"/><rect x="800" y="560" width="40" height="40" fill="#038dea"/><rect x="840" y="560" width="40" height="40" fill="#0489e8"/><rect x="880" y="560" width="40" height="40" fill="#0484e6"/><rect x="920" y="560" width="40" height="40" fill="#037de1"/><rect x="960" y="560" width="40" height="40" fill="#0278de"/><rect x="1000" y="560" width="40" height="40" fill="#0278de"/><rect x="1040" y="560" width="40" height="40" fill="#0278de"/><rect x="-80" y="600" width="40" height="40" fill="#00b5fc"/><rect x="-40" y="600" width="40" height="40" fill="#00b5fc"/><rect x="0" y="600" width="40" height="40" fill="#00b5fc"/><rect x="40" y="600" width="40" height="40" fill="#00b5fd"/><rect x="80" y="600" width="40" height="40" fill="#01b6fd"/><rect x="120" y="600" width="40" height="40" fill="#02b6fc"/><rect x="160" y="600" width="40" height="40" fill="#02b7fc"/><rect x="200" y="600" width="40" height="40" fill="#02b8fc"/><rect x="240" y="600" width="40" height="40" fill="#02b8fc"/><rect x="280" y="600" width="40" height="40" fill="#02b8fc"/><rect x="320" y="600" width="40" height="40" fill="#02b7fb"/><rect x="360" y="600" width="40" height="40" fill="#02b6fa"/><rect x="400" y="600" width="40" height="40" fill="#01b4f9"/><rect x="440" y="600" width="40" height="40" fill="#01b1f7"/><rect x="480" y="600" width="40" height="40" fill="#01aef6"/><rect x="520" y="600" width="40" height="40" fill="#01abf4"/><rect x="560" y="600" width="40" height="40" fill="#02a7f2"/><rect x="600" y="600" width="40" height="40" fill="#02a2ef"/><rect x="640" y="600" width="40" height="40" fill="#029eee"/><rect x="680" y="600" width="40" height="40" fill="#0299ec"/><rect x="720" y="600" width="40" height="40" fill="#0293e9"/><rect x="760" y="600" width="40" height="40" fill="#028ee7"/><rect x="800" y="600" width="40" height="40" fill="#0389e5"/><rect x="840" y="600" width="40" height="40" fill="#0383e3"/><rect x="880" y="600" width="40" height="40" fill="#037ddf"/><rect x="920" y="600" width="40" height="40" fill="#0375d9"/><rect x="960" y="600" width="40" height="40" fill="#0270d6"/><rect x="1000" y="600" width="40" height="40" fill="#0270d6"/><rect x="1040" y="600" width="40" height="40" fill="#0270d6"/><rect x="-80" y="640" width="40" height="40" fill="#00b4fb"/><rect x="-40" y="640" width="40" height="40" fill="#00b4fb"/><rect x="0" y="640" width="40" height="40" fill="#00b4fb"/><rect x="40" y="640" width="40" height="40" fill="#01b5fb"/><rect x="80" y="640" width="40" height="40" fill="#02b5fb"/><rect x="120" y="640" width="40" height="40" fill="#02b5fb"/><rect x="160" y="640" width="40" height="40" fill="#03b6fa"/><rect x="200" y="640" width="40" height="40" fill="#03b6fb"/><rect x="240" y="640" width="40" height="40" fill="#03b7fb"/><rect x="280" y="640" width="40" height="40" fill="#02b6fa"/><rect x="320" y="640" width="40" height="40" fill="#02b5fa"/><rect x="360" y="640" width="40" height="40" fill="#02b4f9"/><rect x="400" y="640" width="40" height="40" fill="#01b2f7"/><rect x="440" y="640" width="40" height="40" fill="#01b0f6"/><rect x="480" y="640" width="40" height="40" fill="#01adf4"/><rect x="520" y="640" width="40" height="40" fill="#02a9f2"/><rect x="560" y="640" width="40" height="40" fill="#02a5f0"/><rect x="600" y="640" width="40" height="40" fill="#02a1ee"/><rect x="640" y="640" width="40" height="40" fill="#029cec"/><rect x="680" y="640" width="40" height="40" fill="#0297e9"/><rect x="720" y="640" width="40" height="40" fill="#0291e7"/><rect x="760" y="640" width="40" height="40" fill="#028be4"/><rect x="800" y="640" width="40" height="40" fill="#0285e1"/><rect x="840" y="640" width="40" height="40" fill="#037fde"/><rect x="880" y="640" width="40" height="40" fill="#0379da"/><rect x="920" y="640" width="40" height="40" fill="#0272d5"/><rect x="960" y="640" width="40" height="40" fill="#026ed2"/><rect x="1000" y="640" width="40" height="40" fill="#026ed2"/><rect x="1040" y="640" width="40" height="40" fill="#026ed2"/><rect x="-80" y="680" width="40" height="40" fill="#01b4f9"/><rect x="-40" y="680" width="40" height="40" fill="#01b4f9"/><rect x="0" y="680" width="40" height="40" fill="#01b4f9"/><rect x="40" y="680" width="40" height="40" fill="#02b4f9"/><rect x="80" y="680" width="40" height="40" fill="#02b4f9"/><rect x="120" y="680" width="40" height="40" fill="#03b5f9"/><rect x="160" y="680" width="40" height="40" fill="#03b5f9"/><rect x="200" y="680" width="40" height="40" fill="#03b5f9"/><rect x="240" y="680" width="40" height="40" fill="#03b5f9"/><rect x="280" y="680" width="40" height="40" fill="#03b4f9"/><rect x="320" y="680" width="40" height="40" fill="#02b3f8"/><rect x="360" y="680" width="40" height="40" fill="#02b2f7"/><rect x="400" y="680" width="40" height="40" fill="#02b0f6"/><rect x="440" y="680" width="40" height="40" fill="#02aef4"/><rect x="480" y="680" width="40" height="40" fill="#02abf2"/><rect x="520" y="680" width="40" height="40" fill="#02a8f1"/><rect x="560" y="680" width="40" height="40" fill="#02a4ef"/><rect x="600" y="680" width="40" height="40" fill="#02a0ed"/><rect x="640" y="680" width="40" height="40" fill="#029aea"/><rect x="680" y="680" width="40" height="40" fill="#0295e7"/><rect x="720" y="680" width="40" height="40" fill="#028fe4"/><rect x="760" y="680" width="40" height="40" fill="#0289e1"/><rect x="800" y="680" width="40" height="40" fill="#0283de"/><rect x="840" y="680" width="40" height="40" fill="#027ddb"/><rect x="880" y="680" width="40" height="40" fill="#0278d8"/><rect x="920" y="680" width="40" height="40" fill="#0273d4"/><rect x="960" y="680" width="40" height="40" fill="#026fd2"/><rect x="1000" y="680" width="40" height="40" fill="#026fd2"/><rect x="1040" y="680" width="40" height="40" fill="#026fd2"/><rect x="-80" y="720" width="40" height="40" fill="#01b4f8"/><rect x="-40" y="720" width="40" height="40" fill="#01b4f8"/><rect x="0" y="720" width="40" height="40" fill="#01b4f8"/><rect x="40" y="720" width="40" height="40" fill="#02b4f7"/><rect x="80" y="720" width="40" height="40" fill="#03b4f7"/><rect x="120" y="720" width="40" height="40" fill="#03b4f7"/><rect x="160" y="720" width="40" height="40" fill="#03b4f7"/><rect x="200" y="720" width="40" height="40" fill="#03b4f7"/><rect x="240" y="720" width="40" height="40" fill="#03b4f7"/><rect x="280" y="720" width="40" height="40" fill="#03b3f7"/><rect x="320" y="720" width="40" height="40" fill="#02b2f7"/><rect x="360" y="720" width="40" height="40" fill="#02b1f6"/><rect x="400" y="720" width="40" height="40" fill="#02aff4"/><rect x="440" y="720" width="40" height="40" fill="#02acf3"/><rect x="480" y="720" width="40" height="40" fill="#02aaf1"/><rect x="520" y="720" width="40" height="40" fill="#02a6ef"/><rect x="560" y="720" width="40" height="40" fill="#02a3ed"/><rect x="600" y="720" width="40" height="40" fill="#029eeb"/><rect x="640" y="720" width="40" height="40" fill="#0299e9"/><rect x="680" y="720" width="40" height="40" fill="#0294e6"/><rect x="720" y="720" width="40" height="40" fill="#028ee3"/><rect x="760" y="720" width="40" height="40" fill="#0288e0"/><rect x="800" y="720" width="40" height="40" fill="#0282dd"/><rect x="840" y="720" width="40" height="40" fill="#027dda"/><rect x="880" y="720" width="40" height="40" fill="#0278d7"/><rect x="920" y="720" width="40" height="40" fill="#0273d4"/><rect x="960" y="720" width="40" height="40" fill="#0270d2"/><rect x="1000" y="720" width="40" height="40" fill="#0270d2"/><rect x="1040" y="720" width="40" height="40" fill="#0270d2"/><rect x="-80" y="760" width="40" height="40" fill="#01b4f8"/><rect x="-40" y="760" width="40" height="40" fill="#01b4f8"/><rect x="0" y="760" width="40" height="40" fill="#01b4f8"/><rect x="40" y="760" width="40" height="40" fill="#02b4f7"/><rect x="80" y="760" width="40" height="40" fill="#03b4f7"/><rect x="120" y="760" width="40" height="40" fill="#03b4f7"/><rect x="160" y="760" width="40" height="40" fill="#03b4f7"/><rect x="200" y="760" width="40" height="40" fill="#03b4f7"/><rect x="240" y="760" width="40" height="40" fill="#03b4f7"/><rect x="280" y="760" width="40" height="40" fill="#03b3f7"/><rect x="320" y="760" width="40" height="40" fill="#02b2f7"/><rect x="360" y="760" width="40" height="40" fill="#02b1f6"/><rect x="400" y="760" width="40" height="40" fill="#02aff4"/><rect x="440" y="760" width="40" height="40" fill="#02acf3"/><rect x="480" y="760" width="40" height="40" fill="#02aaf1"/><rect x="520" y="760" width="40" height="40" fill="#02a6ef"/><rect x="560" y="760" width="40" height="40" fill="#02a3ed"/><rect x="600" y="760" width="40" height="40" fill="#029eeb"/><rect x="640" y="760" width="40" height="40" fill="#0299e9"/><rect x="680" y="760" width="40" height="40" fill="#0294e6"/><rect x="720" y="760" width="40" height="40" fill="#028ee3"/><rect x="760" y="760" width="40" height="40" fill="#0288e0"/><rect x="800" y="760" width="40" height="40" fill="#0282dd"/><rect x="840" y="760" width="40" height="40" fill="#027dda"/><rect x="880" y="760" width="40" height="40" fill="#0278d7"/><rect x="920" y="760" width="40" height="40" fill="#0273d4"/><rect x="960" y="760" width="40" height="40" fill="#0270d2"/><rect x="1000" y="760" width="40" height="40" fill="#0270d2"/><rect x="1040" y="760" width="40" height="40" fill="#0270d2"/><rect x="-80" y="800" width="40" height="40" fill="#01b4f8"/><rect x="-40" y="800" width="40" height="40" fill="#01b4f8"/><rect x="0" y="800" width="40" height="40" fill="#01b4f8"/><rect x="40" y="800" width="40" height="40" fill="#02b4f7"/><rect x="80" y="800" width="40" height="40" fill="#03b4f7"/><rect x="120" y="800" width="40" height="40" fill="#03b4f7"/><rect x="160" y="800" width="40" height="40" fill="#03b4f7"/><rect x="200" y="800" width="40" height="40" fill="#03b4f7"/><rect x="240" y="800" width="40" height="40" fill="#03b4f7"/><rect x="280" y="800" width="40" height="40" fill="#03b3f7"/><rect x="320" y="800" width="40" height="40" fill="#02b2f7"/><rect x="360" y="800" width="40" height="40" fill="#02b1f6"/><rect x="400" y="800" width="40" height="40" fill="#02aff4"/><rect x="440" y="800" width="40" height="40" fill="#02acf3"/><rect x="480" y="800" width="40" height="40" fill="#02aaf1"/><rect x="520" y="800" width="40" height="40" fill="#02a6ef"/><rect x="560" y="800" width="40" height="40" fill="#02a3ed"/><rect x="600" y="800" width="40" height="40" fill="#029eeb"/><rect x="640" y="800" width="40" height="40" fill="#0299e9"/><rect x="680" y="800" width="40" height="40" fill="#0294e6"/><rect x="720" y="800" width="40" height="40" fill="#028ee3"/><rect x="760" y="800" width="40" height="40" fill="#0288e0"/><rect x="800" y="800" width="40" height="40" fill="#0282dd"/><rect x="840" y="800" width="40" height="40" fill="#027dda"/><rect x="880" y="800" width="40" height="40" fill="#0278d7"/><rect x="920" y="800" width="40" height="40" fill="#0273d4"/><rect x="960" y="800" width="40" height="40" fill="#0270d2"/><rect x="1000" y="800" width="40" height="40" fill="#0270d2"/><rect x="1040" y="800" width="40" height="40" fill="#0270d2"/></g>
<polygon points="197,0 970,0 970,223" fill="url(#gTop)"/>
<line x1="197" y1="0" x2="970" y2="223" stroke="#2aa8ff" stroke-width="3" opacity="0.3"/><line x1="197" y1="0" x2="970" y2="223" stroke="#30b0ff" stroke-width="1" opacity="0.45"/>
<polygon points="849,382 970,382 970,387 849,387" fill="#0a7cdc"/>
<polygon points="955,278 960,276 960,493 955,492" fill="#0a7cdc"/>
<g stroke="#36b8ff" stroke-width="1" stroke-linejoin="miter">
<polygon points="849.5,293 955,278.5 955,381.5 849.5,381.5" fill="#22a6fe"/>
<polygon points="960.5,276.5 971,275 971,381.5 960.5,381.5" fill="#22a6fe"/>
<polygon points="849.5,387.5 955,387.5 955,492 849.5,475" fill="#22a6fe"/>
<polygon points="960.5,387.5 971,387.5 971,494 960.5,492.5" fill="#22a6fe"/>
</g>
<polygon points="849.5,475 970,459 970,494 849.5,475" fill="#3cc0ff" opacity="0.3"/>
<line x1="849.5" y1="475" x2="970" y2="459" stroke="#40c8ff" stroke-width="1" opacity="0.5"/>
<line x1="849.5" y1="475" x2="970" y2="494" stroke="#50d0ff" stroke-width="1.2" opacity="0.7"/>
<line x1="850" y1="293" x2="850" y2="476" stroke="#3fd8ff" stroke-width="3" opacity="0.35"/>
<line x1="850" y1="293" x2="850" y2="476" stroke="#6fe6ff" stroke-width="1.2"/>
<line x1="0" y1="588" x2="849" y2="476" stroke="url(#gFloor)" stroke-width="1.6"/>
<line x1="970" y1="549" x2="400" y2="715" stroke="url(#gL2)" stroke-width="1.4"/>
</svg>

<!-- desktop icons -->
<div class="abs" style="left:0;top:0;width:112px;height:290px">
  <svg class="abs" style="left:32px;top:6px" width="48" height="48" viewBox="0 0 48 48">
    <defs><linearGradient id="binL" x1="0" y1="0" x2="0" y2="1"><stop offset="0" stop-color="#f6f7f8"/><stop offset="1" stop-color="#e6e9ec"/></linearGradient>
    <linearGradient id="binR" x1="0" y1="0" x2="0" y2="1"><stop offset="0" stop-color="#eceef0"/><stop offset="1" stop-color="#d9dde2"/></linearGradient></defs>
    <polygon points="5,9.4 26.3,15.6 27.2,45.8 9.8,42.2" fill="url(#binL)" stroke="#b6e2fa" stroke-width="0.9" stroke-linejoin="round"/>
    <polygon points="26.3,15.6 42.5,11.2 38.2,42.8 27.2,45.8" fill="url(#binR)" stroke="#b6e2fa" stroke-width="0.9" stroke-linejoin="round"/>
    <polygon points="5,9.4 18,3 31,5.2 42.5,11.2 26.3,15.6" fill="#fbfcfd" stroke="#c6e8fb" stroke-width="0.8" stroke-linejoin="round"/>
    <path d="M12 8 L18 5 L24 7 L21 11 Z M25 8 L31 6.5 L36 10 L30 12 Z" fill="#e8ebee"/>
    <g fill="none" stroke="#1f78c9" stroke-width="3" stroke-linecap="butt">
      <path d="M12.4 22.6 A6.2 6.2 0 0 1 20.2 21.6"/>
      <path d="M22.6 25.6 A6.2 6.2 0 0 1 19.6 32.6"/>
      <path d="M15.8 33 A6.2 6.2 0 0 1 10.6 26.4"/>
    </g>
    <path d="M19.2 18.8 L23.2 22.6 L18.2 23.6 Z M22.2 34.2 L17 34.8 L19.2 30.2 Z M8.4 28.8 L8.6 23.4 L12.8 26.6 Z" fill="#1f78c9"/>
  </svg>
  <div class="dlabel" style="left:0;width:112px;top:59px">Kosz</div>

  <svg class="abs" style="left:34px;top:111px" width="46" height="46" viewBox="0 0 46 46">
    <defs><linearGradient id="skG" x1="0.15" y1="0.1" x2="0.85" y2="0.95"><stop offset="0" stop-color="#2dbcf6"/><stop offset="0.5" stop-color="#1a98e6"/><stop offset="1" stop-color="#0b74d2"/></linearGradient></defs>
    <path d="M13 1.4 C17 1.4 19 3 23 3 C35 3 43.5 11.5 43.5 23 C43.5 27 42 29 42 33 C42 39.5 37.5 44.4 31 44.4 C27 44.4 25 43 21.5 43 C10.5 43 1.6 34 1.6 23 C1.6 19 3 17 3 13 C3 6.6 7 1.4 13 1.4 Z" fill="url(#skG)"/>
    <text x="22.5" y="37" text-anchor="middle" font-family="Liberation Sans" font-weight="bold" font-size="38" fill="#fff" transform="translate(22.5 0) scale(0.9 1) translate(-22.5 0)">S</text>
  </svg>
  <div class="abs" style="left:32px;top:145px;width:13px;height:13px"><svg width="13" height="13" viewBox="0 0 13 13"><rect x="0.5" y="0.5" width="12" height="12" fill="#fff" stroke="#d8e4ee" stroke-width="1"/><path d="M3 11.5 C2.6 8 4 5.6 7.4 5.2 L6.6 3 L11 3.4 L10.4 7.8 L8.8 6.6 C6.4 7.2 4.8 8.6 3 11.5 Z" fill="#3b5894"/></svg></div>
  <div class="dlabel" style="left:0;width:112px;top:162px">Skype</div>

  <div class="abs" style="left:32px;top:213px;width:48px;height:48px;background:#0b78d7"></div>
  <svg class="abs" style="left:32px;top:213px" width="48" height="48" viewBox="0 0 48 48"><path d="M9.2 21.4 C12 15 17 8.8 24 8.8 C33 8.8 38.6 15 38.6 22.5 L38.6 26.8 L18.3 26.8 C18.8 31 22 33.7 26.4 33.7 C30 33.7 33 32.6 35 30.6 L35 37 C32.5 38.3 29 38.7 25.5 38.7 C17 38.7 12.4 33 12.4 26 C12.4 22 14 18.6 17.4 16.2 C14.2 17.4 11.4 19.2 9.2 21.4 Z M18.3 20.7 L28.8 20.7 C28.8 17.4 26.8 15.4 23.8 15.4 C21 15.4 18.9 17.4 18.3 20.7 Z" fill="#fff" fill-rule="evenodd"/></svg>
  <div class="abs" style="left:32px;top:248px;width:13px;height:13px"><svg width="13" height="13" viewBox="0 0 13 13"><rect x="0.5" y="0.5" width="12" height="12" fill="#fff" stroke="#d8e4ee" stroke-width="1"/><path d="M3 11.5 C2.6 8 4 5.6 7.4 5.2 L6.6 3 L11 3.4 L10.4 7.8 L8.8 6.6 C6.4 7.2 4.8 8.6 3 11.5 Z" fill="#3b5894"/></svg></div>
  <div class="dlabel" style="left:0;width:112px;top:266px">Microsoft Edge</div>
</div>

<!-- action center -->
<div class="abs" style="left:969px;top:0;width:1px;height:728px;background:rgba(0,40,90,.22)"></div>
<div class="abs" style="left:0;top:727px;width:970px;height:1px;background:rgba(0,40,90,.22)"></div>
<div class="abs" style="left:0;top:728px;width:971px;height:1px;background:#b5e6fd;z-index:5"></div>
<div id="panel">
  <div class="title">Brak nowych powiadomień</div>
  <div class="zwin">Zwiń</div>
</div>
<div id="tiles">
<div class="tile" style="left:986px;top:381px;background:#deeaf3"><svg viewBox="0 0 16 16"><g fill="none" stroke="#000" stroke-width="1.2" stroke-linejoin="round"><path d="M7.4 11 H0.8 V1.8 H14.2 V8.6"/><path d="M9.8 10.6 V5.4 A1.1 1.1 0 0 1 12 5.4 V8.8 H13.3 A2.2 2.2 0 0 1 15.5 11 V11.9 A3.6 3.6 0 0 1 11.9 15.5 H11.3 A3.8 3.8 0 0 1 7.5 11.7 A1.5 1.5 0 0 1 9.8 10.6"/></g></svg><div class="t">Tryb tabletu</div></div>
<div class="tile on" style="left:1078px;top:381px"><svg viewBox="0 0 16 16"><g fill="none" stroke="#fff" stroke-width="1.2" stroke-linejoin="round"><circle cx="7.5" cy="2.6" r="1.9"/><path d="M7.5 4.5 V10"/><path d="M3.6 9.6 H11.4 L14.4 15.5 H0.6 Z"/></g></svg><div class="t">Lokalizacja</div></div>
<div class="tile dis" style="left:1170px;top:381px"><svg viewBox="0 0 16 16"><g fill="none" stroke="#7d8188" stroke-width="1.1"><path d="M7.4 0.8 C10 3 11.8 5 11.8 7.3 A4.4 4.4 0 0 1 3 7.3 C3 5 4.8 3 7.4 0.8 Z"/><path d="M7.4 3.6 V15.7"/></g></svg><div class="t">Oszczędzanie<br>baterii</div></div>
<div class="tile on" style="left:1262px;top:381px"><svg viewBox="0 0 16 16"><path d="M5 5.2 L11.8 11.4 L8.5 14.8 V1.8 L11.8 5.2 L5 11.4" fill="none" stroke="#fff" stroke-width="1.1" stroke-linejoin="round"/></svg><div class="t">Nie połączono</div></div>

<div class="tile" style="left:986px;top:449px;background:#deeaf3"><svg viewBox="0 0 16 16"><path d="M4.2 10.8 A4.5 4.5 0 0 0 10.8 4.2 A8 8 0 0 1 4.2 10.8 Z" fill="#000"/><g stroke="#000" stroke-width="1.3" fill="none"><circle cx="7.5" cy="7.5" r="4.1"/><path d="M7.5 0 V1.9 M7.5 13.1 V15 M0 7.5 H1.9 M13.1 7.5 H15 M2.1 2.1 L3.7 3.7 M11.3 11.3 L12.9 12.9 M2.1 12.9 L3.7 11.3 M11.3 3.7 L12.9 2.1"/></g></svg><div class="t">Wyświetlanie<br>nocne</div></div>
<div class="tile" style="left:1078px;top:449px"><svg viewBox="0 0 16 16"><g fill="none" stroke="#000" stroke-width="1.2"><path d="M7.6 6 V15.8"/><path d="M5 3.6 A3.4 3.4 0 0 0 5 8.6"/><path d="M10.2 3.6 A3.4 3.4 0 0 1 10.2 8.6"/><path d="M2.4 1.2 A6.6 6.6 0 0 0 2.4 11"/><path d="M12.8 1.2 A6.6 6.6 0 0 1 12.8 11"/></g></svg><div class="t">Hotspot<br>mobilny</div></div>
<div class="tile" style="left:1170px;top:449px"><svg viewBox="0 0 16 16"><path d="M4.6 0.7 H6.9 L10 6.3 H14 A1.5 1.5 0 0 1 14 9.3 H10 L6.9 14.9 H4.6 L6.5 9.3 H2.6 L1 10.4 L1.7 7.8 L1 5.2 L2.6 6.3 H6.5 Z" fill="none" stroke="#000" stroke-width="1.2" stroke-linejoin="round"/></svg><div class="t">Tryb<br>samolotowy</div></div>
<div class="tile" style="left:1262px;top:449px"><svg viewBox="0 0 16 16"><g fill="none" stroke="#000" stroke-width="1.2" stroke-linejoin="round"><path d="M0.4 7.2 V14.5 H9.7 V12.2"/><path d="M2.4 10.9 C3.4 7.9 5.6 6 8.5 5.9 V4.4 L11.8 7.5 L8.5 10.7 V9.1 C6 9.1 4 9.8 2.4 10.9 Z"/><path d="M8.1 0.6 A7.3 7.3 0 0 1 15.4 7.6"/><path d="M8.3 2.7 A5.2 5.2 0 0 1 13.3 7.4"/></g></svg><div class="t">Udostępnianie<br>w pobliżu</div></div>

<div class="tile" style="left:986px;top:517px;background:#dee7f1"><svg viewBox="0 0 16 16"><g fill="none" stroke="#000" stroke-width="1.15" stroke-linejoin="round"><path d="M7.09 0.76 L8.91 0.76 L9.31 2.55 L10.93 3.23 L12.47 2.23 L13.77 3.53 L12.77 5.07 L13.45 6.69 L15.24 7.09 L15.24 8.91 L13.45 9.31 L12.77 10.93 L13.77 12.47 L12.47 13.77 L10.93 12.77 L9.31 13.45 L8.91 15.24 L7.09 15.24 L6.69 13.45 L5.07 12.77 L3.53 13.77 L2.23 12.47 L3.23 10.93 L2.55 9.31 L0.76 8.91 L0.76 7.09 L2.55 6.69 L3.23 5.07 L2.23 3.53 L3.53 2.23 L5.07 3.23 L6.69 2.55 Z"/><circle cx="8" cy="8" r="2.5"/></g></svg><div class="t">Wszystkie<br>ustawienia</div></div>
<div class="tile" style="left:1078px;top:517px"><svg viewBox="0 0 16 16"><g fill="none" stroke="#000" stroke-width="1.2"><path d="M1.5 15.5 A11 11 0 0 1 9.8 5.2"/><path d="M4.5 15.5 A8 8 0 0 1 11.4 8.2"/><path d="M7.5 15.5 A5 5 0 0 1 11.4 11"/><path d="M13.5 6 V15.8"/></g><rect x="11" y="1" width="5" height="5.8" fill="#000"/><path d="M12.3 2.6 H14.7 M12.3 4.1 V4.9 H14.7 V4.1" fill="none" stroke="#fff" stroke-width="0.9"/><rect x="10" y="14.2" width="1.6" height="1.6" fill="#000"/></svg><div class="t">Sieć</div></div>
<div class="tile" style="left:1170px;top:517px"><svg viewBox="0 0 16 16"><g fill="none" stroke="#000" stroke-width="1.2"><path d="M10.2 4.3 V1.3 H0.7 V7.4 H8"/><path d="M3 9.2 H7.5 M5.2 7.4 V9.2"/><rect x="9.4" y="5.2" width="6" height="9.4"/><circle cx="12.4" cy="8.5" r="1"/></g><rect x="11.8" y="10.9" width="1.2" height="1.6" fill="#000"/></svg><div class="t">Połącz</div></div>
<div class="tile" style="left:1262px;top:517px"><svg viewBox="0 0 16 16"><g fill="none" stroke="#000" stroke-width="1.2"><path d="M4.4 5.3 V2.3 H15.4 V10.2 H9.6"/><rect x="1.6" y="5.4" width="8" height="5"/><path d="M0.6 11.6 H10.6 V12.4 H0.6 Z"/></g></svg><div class="t">Wyświetlaj na<br>innym ekranie</div></div>

<div class="tile" style="left:986px;top:585px;background:#dee4ef"><svg viewBox="0 0 16 16"><g fill="none" stroke="#000" stroke-width="1.2"><circle cx="2.3" cy="6.4" r="2"/><circle cx="12.6" cy="6.4" r="2"/><path d="M4.3 6.6 C6 7.4 6.8 8.4 7.5 9.6"/><path d="M10.6 6.6 C8.4 7.2 6.2 9 6 10.6 A1.9 1.9 0 1 0 8.5 9.8"/><path d="M6.5 4 L7.4 5 L8.3 4"/></g></svg><div class="t">VPN</div></div>
<div class="tile" style="left:1078px;top:585px"><svg viewBox="0 0 16 16"><path d="M8.2 0.6 A7.4 7.4 0 1 1 0.7 12.2 A8 8 0 0 0 8.2 0.6 Z" fill="none" stroke="#000" stroke-width="1.2" stroke-linejoin="round"/></svg><div class="t">Skupienie</div></div>
<div class="tile" style="left:1170px;top:585px"><svg viewBox="0 0 16 16"><g fill="none" stroke="#000" stroke-width="1.15"><path d="M2.3 6.6 A5.1 5.1 0 0 1 12 4.5 A4.4 4.4 0 0 1 13.2 13.3 H7.4"/><circle cx="1.8" cy="9.9" r="1.5"/><circle cx="4" cy="14.1" r="1.5"/><path d="M3.2 10.6 L10.9 10.4"/><path d="M4.6 13 C5.8 11.4 7.8 9 9.6 7.4"/></g></svg><div class="t">Wycinek<br>ekranu</div></div>
</div>
<!-- brightness -->
<svg class="abs" style="left:1017px;top:673px" width="21" height="20" viewBox="0 0 21 20"><g stroke="#111" stroke-width="1.3" fill="none"><circle cx="10.5" cy="10" r="4"/><path d="M10.5 0.6 V3.4 M10.5 16.6 V19.4 M1 10 H3.8 M17.2 10 H20 M3.8 3.3 L5.7 5.2 M15.3 14.8 L17.2 16.7 M3.8 16.7 L5.7 14.8 M15.3 5.2 L17.2 3.3"/></g></svg>
<div class="abs" style="left:1054px;top:683px;width:110px;height:2px;background:#1a6dbf"></div>
<div class="abs" style="left:1164px;top:683px;width:138px;height:2px;background:#7b8089"></div>
<div class="abs" style="left:1160px;top:672px;width:8px;height:24px;border-radius:4px;background:#0a78d6"></div>
<div class="abs" style="left:1222px;top:664px;width:104px;height:1px;background:rgba(150,160,180,.35)"></div>


<div id="taskbar">
  <svg class="abs" style="left:16px;top:11px" width="16" height="16" viewBox="0 0 16 16"><path d="M0 2.3 L6.4 1.4 V7.4 H0 Z M7.3 1.3 L16 0 V7.4 H7.3 Z M0 8.3 H6.4 V14.5 L0 13.6 Z M7.3 8.3 H16 V16 L7.3 14.7 Z" fill="#000"/></svg>
  <div class="abs" style="left:48px;top:0;width:344px;height:39px;background:#fff;border-bottom:1px solid #9aa3aa"></div>
  <svg class="abs" style="left:60px;top:11px" width="17" height="17" viewBox="0 0 17 17"><g fill="none" stroke="#222" stroke-width="1.3"><circle cx="10.5" cy="6" r="5"/><path d="M7 9.6 L1 15.8"/></g></svg>
  <div class="abs" style="left:88px;top:12px;font-size:14.6px;line-height:18px;color:#333;white-space:nowrap">Wpisz tutaj, aby wyszukać</div>
  <!-- task view -->
  <svg class="abs" style="left:406px;top:10px" width="20" height="18" viewBox="0 0 20 18"><g fill="none" stroke="#111" stroke-width="1.3"><path d="M2.9 1.9 V4.35 H12.35 V1.9"/><rect x="2.85" y="6.95" width="9.5" height="4.8"/><path d="M2.9 16.7 V14.3 H12.35 V16.7"/><path d="M16.5 2 V4.6 M16.5 10.4 V16.7"/></g><rect x="15.3" y="6.4" width="2.5" height="2.3" fill="#111"/></svg>
  <!-- edge -->
  <svg class="abs" style="left:451px;top:4px" width="32" height="32" viewBox="0 0 48 48"><path d="M9.2 21.4 C12 15 17 8.8 24 8.8 C33 8.8 38.6 15 38.6 22.5 L38.6 26.8 L18.3 26.8 C18.8 31 22 33.7 26.4 33.7 C30 33.7 33 32.6 35 30.6 L35 37 C32.5 38.3 29 38.7 25.5 38.7 C17 38.7 12.4 33 12.4 26 C12.4 22 14 18.6 17.4 16.2 C14.2 17.4 11.4 19.2 9.2 21.4 Z M18.3 20.7 L28.8 20.7 C28.8 17.4 26.8 15.4 23.8 15.4 C21 15.4 18.9 17.4 18.3 20.7 Z" fill="#0f78d4" fill-rule="evenodd"/></svg>
  <!-- explorer -->
  <svg class="abs" style="left:504px;top:10px" width="24" height="20" viewBox="0 0 24 20"><rect x="1" y="3" width="21.5" height="15" rx="0.8" fill="#fcd669"/><rect x="1" y="0.6" width="9.6" height="3" rx="1.4" fill="#dba426"/><path d="M5.2 18.7 V11 H18.8 V18.7 H14.3 V15 H9.5 V18.7 Z" fill="#4e8fc4"/></svg>
  <!-- store -->
  <svg class="abs" style="left:552px;top:7px" width="25" height="25" viewBox="0 0 25 25"><path d="M7.6 6 C7.6 2 9.5 1 12 1 C14.5 1 16.3 2 16.3 6" fill="none" stroke="#111" stroke-width="1.3"/><path d="M9.6 6 C9.6 3.3 10.6 2.4 12.2 2.4 C13.6 2.4 14 3.4 14 5" fill="none" stroke="#111" stroke-width="1"/><path d="M18.5 6 V2.5" stroke="#111" stroke-width="1.2"/><rect x="1" y="6.5" width="23" height="17.5" rx="0.6" fill="#050505"/><rect x="7" y="10" width="5" height="5" fill="#f25022"/><rect x="13" y="10" width="5" height="5" fill="#7fba00"/><rect x="7" y="16" width="5" height="5" fill="#00a4ef"/><rect x="13" y="16" width="5" height="5" fill="#ffb900"/></svg>
  <!-- mail -->
  <svg class="abs" style="left:601px;top:8px" width="26" height="21" viewBox="0 0 26 21"><path d="M1 7.5 L13 1 L25 7.5 V20 H1 Z" fill="#3d4144"/><path d="M1.5 8 L24.5 8.2 L14.5 12.5 L18.5 16 L12.5 13 Z" fill="#fff"/></svg>
  <!-- paint -->
  <svg class="abs" style="left:650px;top:7px" width="27" height="26" viewBox="0 0 27 26"><path d="M1.5 15 C1 10 6 5.5 11 5.3 C17 5 23 8 23 12.5 C23 17 18 20 13 20.5 C11 21 9.5 23 7.5 22.5 C4.5 22 2 19 1.5 15 Z" fill="#e6f0f8" stroke="#7a9ec6" stroke-width="0.9"/><circle cx="4.9" cy="14" r="1.7" fill="#d9605a"/><circle cx="8.9" cy="10.3" r="1.6" fill="#6cbf4a"/><circle cx="13.6" cy="8.7" r="1.6" fill="#f0bc45"/><circle cx="10.8" cy="15.6" r="1.4" fill="#dbe9f5" stroke="#6a94c2" stroke-width="0.7"/><path d="M23 2 L25.6 3.8 L13.4 24.6 L11.8 25 L12 23.4 Z" fill="#e2a25c"/><path d="M22.6 1.2 L26 3.4 L24.2 6.6 L21 4.4 Z" fill="#c89866"/></svg>
  <div class="abs" style="left:643px;top:38px;width:40px;height:2px;background:#0063b8"></div>

  <!-- tray -->
  <svg class="abs" style="left:1155px;top:15px" width="16" height="10" viewBox="0 0 16 10"><path d="M2.3 7.6 L8 1.9 L13.7 7.6" fill="none" stroke="#111" stroke-width="1.3"/></svg>
  <svg class="abs" style="left:1178px;top:13px" width="19" height="14" viewBox="0 0 19 14"><path d="M1.6 1.4 V4.6 M4.6 1.4 V4.6 M3.1 7.6 V11.8" fill="none" stroke="#111" stroke-width="1.1"/><path d="M0.7 4.4 H5.5 V5.9 A2.4 2.4 0 0 1 0.7 5.9 Z" fill="#111"/><rect x="5.9" y="3.3" width="10.4" height="8" fill="none" stroke="#111" stroke-width="1.2"/><rect x="6.8" y="4.2" width="7.4" height="6.2" fill="#111"/><rect x="16.6" y="5.6" width="1.3" height="3.4" fill="#111"/></svg>
  <svg class="abs" style="left:1205px;top:14px" width="15" height="13" viewBox="0 0 15 13"><g fill="none" stroke="#111" stroke-width="1.2"><path d="M1.4 12.4 A11 11 0 0 1 12.4 1.4"/><path d="M4.2 12.4 A8.2 8.2 0 0 1 12.4 4.2"/><path d="M7 12.4 A5.4 5.4 0 0 1 12.4 7"/></g><circle cx="11.4" cy="11.5" r="1.3" fill="#111"/></svg>
  <svg class="abs" style="left:1226px;top:12px" width="19" height="15" viewBox="0 0 19 15"><g fill="none" stroke="#111" stroke-width="1.2" stroke-linejoin="round"><path d="M1.6 5 H4.2 L8 1.5 V13.5 L4.2 10 H1.6 Z"/><path d="M10.6 5.2 A3.2 3.2 0 0 1 10.6 9.8"/><path d="M12.6 3.2 A5.6 5.6 0 0 1 12.6 11.8"/><path d="M14.6 1.2 A8 8 0 0 1 14.6 13.8"/></g></svg>
  <div class="abs" style="left:1246px;top:2px;width:68px;text-align:center;font-size:10.9px;line-height:18px;color:#111;text-shadow:0.2px 0 0 #111">14:04</div>
  <div class="abs" style="left:1246px;top:19px;width:68px;text-align:center;font-size:10.8px;line-height:18px;color:#111;text-shadow:0.2px 0 0 #111">03.04.2019</div>
  <div class="abs" style="left:1313px;top:0;width:40px;height:39px;background:rgba(255,255,255,.25)"></div>
  <svg class="abs" style="left:1324px;top:11px" width="18" height="17" viewBox="0 0 18 17"><path d="M1.6 1.6 H16.4 V12.9 H11.9 L9 15.8 L6.1 12.9 H1.6 Z" fill="none" stroke="#111" stroke-width="1.2"/></svg>
  <div class="abs" style="left:1361px;top:0;width:1px;height:39px;background:#a8b2c2"></div>
</div>

</body></html>
